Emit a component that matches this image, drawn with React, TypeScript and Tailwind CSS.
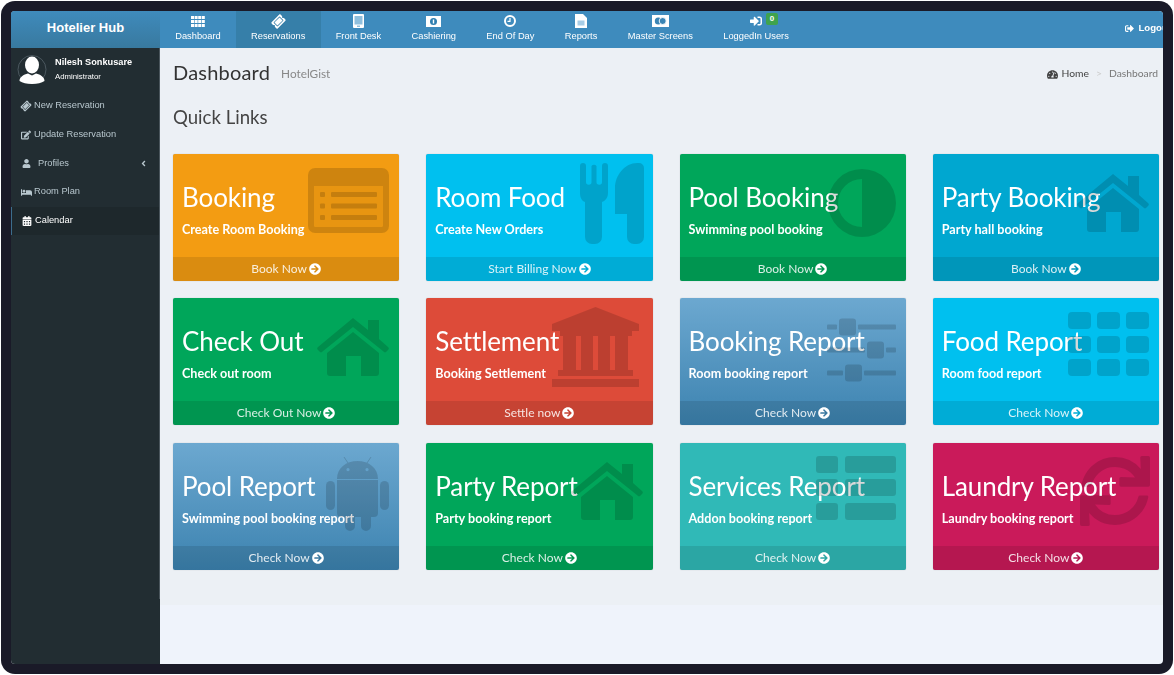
import React from "react";
import {
  FaTicketAlt, FaSignInAlt, FaSignOutAlt,
  FaTachometerAlt, FaArrowCircleRight, FaEdit, FaUser, FaBed, FaCalendarAlt, FaAngleLeft, FaSync,
} from "react-icons/fa";

const shade = "rgba(0,0,0,0.15)";

function BookingIcon() {
  return (
    <svg width="81" height="65" viewBox="0 0 81 65">
      <path fillRule="evenodd" fill={shade} d="M7 0h67a7 7 0 0 1 7 7v51a7 7 0 0 1-7 7H7a7 7 0 0 1-7-7V7a7 7 0 0 1 7-7zM6 18v40a1 1 0 0 0 1 1h67a1 1 0 0 0 1-1V18z" />
      <g fill={shade}>
        <rect x="6" y="18" width="69" height="41" opacity="0.3" />
        <rect x="12" y="24" width="5" height="5" rx="1" />
        <rect x="23" y="24" width="46" height="5" rx="1" />
        <rect x="12" y="35.500" width="5" height="5" rx="1" />
        <rect x="23" y="35.500" width="46" height="5" rx="1" />
        <rect x="12" y="47" width="5" height="5" rx="1" />
        <rect x="23" y="47" width="46" height="5" rx="1" />
      </g>
    </svg>
  );
}
function FoodIcon() {
  return (
    <svg width="64" height="81" viewBox="0 0 64 81">
      <path fill={shade} d="M0 3a3 3 0 0 1 6 0V19a2.500 2.500 0 0 0 5.500 0V3a3 3 0 0 1 5 0V19a2.500 2.500 0 0 0 5.500 0V3a3 3 0 0 1 6 0V30c0 5-3 8-6 9V74a7 7 0 0 1-7 7h-3a7 7 0 0 1-7-7V39C2 38 0 35 0 30z" />
      <path fill={shade} d="M57 0h2a5 5 0 0 1 5 5v69a7 7 0 0 1-7 7h-3a7 7 0 0 1-7-7V51H35V25C35 12 45 0 57 0z" />
    </svg>
  );
}
function ContrastIcon() {
  return (
    <svg width="68" height="68" viewBox="0 0 68 68">
      <path fill={shade} fillRule="evenodd" d="M34 0a34 34 0 1 1 0 68a34 34 0 1 1 0-68zM34 10a24 24 0 0 0 0 48z" />
    </svg>
  );
}
function HouseIcon() {
  return (
    <svg width="72" height="58" viewBox="0 0 72 58">
      <g fill={shade}>
        <path d="M36 0 L51 12 V2 H62 V21 L71 29 a2 2 0 0 1 0 3 l-1.500 1.500 a2 2 0 0 1-3 0 L36 9 L5.500 33.500 a2 2 0 0 1-3 0 L1 32 a2 2 0 0 1 0-3z" />
        <path d="M36 14 L62 35 V55 a3 3 0 0 1-3 3 H44 V38 H29 V58 H13 a3 3 0 0 1-3-3 V35z" />
      </g>
    </svg>
  );
}
function BankIcon() {
  return (
    <svg width="87" height="80" viewBox="0 0 87 80">
      <g fill={shade}>
        <path d="M43.500 0 L87 17 V24 H0 V17z" />
        <rect x="8" y="24" width="72" height="5" />
        <rect x="11" y="29" width="13" height="34" />
        <rect x="29" y="29" width="12" height="34" />
        <rect x="46" y="29" width="12" height="34" />
        <rect x="63" y="29" width="13" height="34" />
        <rect x="6" y="63" width="75" height="6" />
        <rect x="0" y="72" width="87" height="8" />
      </g>
    </svg>
  );
}
function SlidersIcon() {
  const rows = [
    { y: 9, k: 12 },
    { y: 32, k: 40 },
    { y: 55, k: 18 },
  ];
  return (
    <svg width="69" height="64" viewBox="0 0 69 64">
      <g fill={shade}>
        {rows.map((r) => (
          <g key={r.y}>
            <rect x="0" y={r.y - 2.5} width={r.k - 2} height="5" rx="1" />
            <rect x={r.k + 19} y={r.y - 2.5} width={69 - r.k - 19} height="5" rx="1" />
            <rect x={r.k} y={r.y - 8.5} width="17" height="17" rx="3" />
          </g>
        ))}
      </g>
    </svg>
  );
}
function GridIcon() {
  const xs = [0, 29, 58];
  const ys = [0, 24, 47];
  return (
    <svg width="81" height="64" viewBox="0 0 81 64">
      <g fill={shade}>
        {ys.map((y) => xs.map((x) => <rect key={`${x}-${y}`} x={x} y={y} width="23" height="17" rx="4" />))}
      </g>
    </svg>
  );
}
function ListIcon() {
  const ys = [0, 23, 47];
  return (
    <svg width="80" height="64" viewBox="0 0 80 64">
      <g fill={shade}>
        {ys.map((y) => (
          <g key={y}>
            <rect x="0" y={y} width="22" height="17" rx="3" />
            <rect x="29" y={y} width="51" height="17" rx="3" />
          </g>
        ))}
      </g>
    </svg>
  );
}
function AndroidIcon() {
  return (
    <svg width="63" height="74" viewBox="0 0 63 74">
      <g fill={shade}>
        <rect x="0" y="24" width="9" height="29" rx="4.500" />
        <rect x="54" y="24" width="9" height="29" rx="4.500" />
        <path fillRule="evenodd" d="M11 22C11 11 20 4 31.500 4S52 11 52 22zM22 11a1.600 1.600 0 1 0 0 3.200a1.600 1.600 0 1 0 0-3.200zM41 11a1.600 1.600 0 1 0 0 3.200a1.600 1.600 0 1 0 0-3.200z" />
        <path d="M11 23H52V56a4 4 0 0 1-4 4H15a4 4 0 0 1-4-4z" />
        <path d="M19 60H29V69a5 5 0 0 1-10 0zM35 60H45V69a5 5 0 0 1-10 0z" />
      </g>
      <path d="M18 0l4 6M45 0l-4 6" stroke={shade} strokeWidth="1" />
    </svg>
  );
}

function NavGrid() {
  return (
    <svg width="14" height="11" viewBox="0 0 14 11" fill="#fff">
      {[0, 4, 8].map((y) => [0, 3.6, 7.2, 10.8].map((x) => <rect key={`${x}-${y}`} x={x} y={y} width="3" height="3" />))}
    </svg>
  );
}
function NavBuilding() {
  return (
    <svg width="11" height="14" viewBox="0 0 11 14">
      <rect width="11" height="14" rx="1" fill="#fff" />
      <rect x="1.500" y="2" width="8" height="8.500" fill="#8fbfdd" />
      <rect x="4" y="11.500" width="3" height="1.500" fill="#8fbfdd" />
    </svg>
  );
}
function NavMoney({ w }: { w: number }) {
  return (
    <svg width={w} height="11" viewBox="0 0 15 11">
      <rect width="15" height="11" fill="#fff" />
      <circle cx="7.500" cy="5.500" r="3.500" fill="#2f7fb0" />
      <rect x="6.800" y="3.500" width="1.400" height="4" fill="#fff" />
    </svg>
  );
}
function NavMaster() {
  return (
    <svg width="17" height="12" viewBox="0 0 17 12">
      <rect width="17" height="12" fill="#fff" />
      <circle cx="6.300" cy="6" r="3.500" fill="#3a85b5" />
      <circle cx="10.700" cy="6" r="3.500" fill="#3a85b5" stroke="#fff" strokeWidth="0.900" />
    </svg>
  );
}
function NavClock() {
  return (
    <svg width="12" height="12" viewBox="0 0 12 12">
      <circle cx="6" cy="6" r="5" fill="none" stroke="#fff" strokeWidth="2" />
      <path d="M6 3v3.300H3.500" fill="none" stroke="#fff" strokeWidth="1.200" />
    </svg>
  );
}
function NavFile() {
  return (
    <svg width="12" height="14" viewBox="0 0 12 14">
      <path d="M0 0h8l4 4v10H0z" fill="#fff" />
      <path d="M2.500 6.500h7v5h-7z" fill="#a8cde6" />
    </svg>
  );
}

const cards = [
  { t: "Booking", s: "Create Room Booking", f: "Book Now", bg: "bg-[#f39c12]", icon: <BookingIcon />, pos: "top-[14px] right-[10px]" },
  { t: "Room Food", s: "Create New Orders", f: "Start Billing Now", bg: "bg-[#00c0ef]", icon: <FoodIcon />, pos: "top-[9px] right-[9px]" },
  { t: "Pool Booking", s: "Swimming pool booking", f: "Book Now", bg: "bg-[#00a65a]", icon: <ContrastIcon />, pos: "top-[15px] right-[10px]" },
  { t: "Party Booking", s: "Party hall booking", f: "Book Now", bg: "bg-[#00a7d0]", icon: <HouseIcon />, pos: "top-[20px] right-[10px]" },
  { t: "Check Out", s: "Check out room", f: "Check Out Now", bg: "bg-[#00a65a]", icon: <HouseIcon />, pos: "top-[20px] right-[10px]" },
  { t: "Settlement", s: "Booking Settlement", f: "Settle now", bg: "bg-[#dd4b39]", icon: <BankIcon />, pos: "top-[9px] right-[14px]" },
  { t: "Booking Report", s: "Room booking report", f: "Check Now", bg: "bg-gradient-to-b from-[#6ca8d0] to-[#3c83b0]", icon: <SlidersIcon />, pos: "top-[20px] right-[10px]" },
  { t: "Food Report", s: "Room food report", f: "Check Now", bg: "bg-[#00c0ef]", icon: <GridIcon />, pos: "top-[14px] right-[10px]" },
  { t: "Pool Report", s: "Swimming pool booking report", f: "Check Now", bg: "bg-gradient-to-b from-[#6ca8d0] to-[#3c83b0]", icon: <AndroidIcon />, pos: "top-[14px] right-[10px]" },
  { t: "Party Report", s: "Party booking report", f: "Check Now", bg: "bg-[#00a65a]", icon: <HouseIcon />, pos: "top-[19px] right-[10px]" },
  { t: "Services Report", s: "Addon booking report", f: "Check Now", bg: "bg-[#30b9b7]", icon: <ListIcon />, pos: "top-[13px] right-[10px]" },
  { t: "Laundry Report", s: "Laundry booking report", f: "Check Now", bg: "bg-[#ca1a5a]", icon: <FaSync size={70} color={shade} />, pos: "top-[13px] right-[9px]" },
];

const nav = [
  { l: "Dashboard", i: <NavGrid /> },
  { l: "Reservations", i: <FaTicketAlt size={13} className="-rotate-45" />, active: true },
  { l: "Front Desk", i: <NavBuilding /> },
  { l: "Cashiering", i: <NavMoney w={15} /> },
  { l: "End Of Day", i: <NavClock /> },
  { l: "Reports", i: <NavFile /> },
  { l: "Master Screens", i: <NavMaster /> },
];

const side = [
  { l: "New Reservation", i: <FaTicketAlt size={10} className="-rotate-45" /> },
  { l: "Update Reservation", i: <FaEdit size={10} /> },
  { l: "Profiles", i: <FaUser size={9} />, more: true },
  { l: "Room Plan", i: <FaBed size={11} /> },
  { l: "Calendar", i: <FaCalendarAlt size={10} />, active: true },
];

function Avatar() {
  return (
    <svg width="30" height="29" viewBox="0 0 30 29">
      <circle cx="15" cy="14.500" r="14" fill="#222d32" stroke="#55626a" strokeWidth="0.800" />
      <ellipse cx="15" cy="10" rx="7" ry="8.500" fill="#fff" />
      <path d="M2.500 26c0-4 4-6.500 8.500-7.500l4 2 4-2c4.500 1 8.500 3.500 8.500 7.500c-3 1.800-7 3-12.500 3s-9.500-1.200-12.500-3z" fill="#fff" />
    </svg>
  );
}

export default function App() {
  return (
    <div className="w-[1174px] h-[675px] bg-white overflow-hidden">
      <div className="m-px w-[1172px] h-[673px] p-[10px] rounded-[14px] bg-[#1a1a28]">
        <div className="w-[1152px] h-[653px] rounded-[4px] overflow-hidden flex flex-col bg-[#eff3fb] blur-[0.3px] font-['Liberation_Sans',sans-serif]">
          <header className="h-[37px] shrink-0 flex bg-[#3e8bbd] text-white overflow-hidden">
            <div className="w-[149px] shrink-0 flex items-center justify-center pb-[3px] font-bold text-[13px] bg-gradient-to-b from-[#3f8bbc] to-[#38799f]">
              Hotelier Hub
            </div>
            {nav.map((n) => (
              <div key={n.l} className={`h-full px-[15.200px] flex flex-col items-center justify-between pt-[3px] pb-[6px] ${n.active ? "bg-[#367fa9]" : ""}`}>
                <div className="h-[14px] flex items-center">{n.i}</div>
                <div className="text-[9.3px] leading-[12px] whitespace-nowrap text-white">{n.l}</div>
              </div>
            ))}
            <div className="h-full px-[15.200px] flex flex-col items-center justify-between pt-[3px] pb-[6px] relative">
              <div className="h-[14px] flex items-center"><FaSignInAlt size={12} /></div>
              <span className="absolute left-[58px] top-[2px] w-[12px] h-[12px] rounded-[2px] bg-[#3fa34d] text-[8px] font-bold flex items-center justify-center">0</span>
              <div className="text-[9.3px] leading-[12px] whitespace-nowrap text-white">LoggedIn Users</div>
            </div>
            <div className="ml-auto -mr-[8px] flex items-center gap-[5px] text-[9.6px] font-semibold pb-[2px]">
              <FaSignOutAlt size={9} />
              <span>Logout</span>
            </div>
          </header>
          <div className="flex-1 flex min-h-0">
            <aside className="w-[149px] shrink-0 bg-[#222d32] text-[#b8c7ce]">
              <div className="h-[551px] border-r border-r-[#4a555c]">
                <div className="h-[44px] flex pl-[6px] pt-[7px]">
                  <Avatar />
                  <div className="ml-[8px] text-white">
                    <div className="text-[9.2px] font-bold leading-[12px] mt-[1px]">Nilesh Sonkusare</div>
                    <div className="text-[7.8px] leading-[10px] mt-[4px]">Administrator</div>
                  </div>
                </div>
                {side.map((s) => (
                  <div key={s.l} className={`h-[28.7px] flex items-center pl-[10px] pr-[11px] text-[9.3px] ${s.active ? "bg-[#1e282c] text-white border-l border-l-[#3c6d8c] pl-[9px]" : ""}`}>
                    <span className={`${s.more ? "w-[17px] pl-px" : "w-[13px]"} flex items-center`}>{s.i}</span>
                    <span>{s.l}</span>
                    {s.more && <FaAngleLeft size={9} className="ml-auto" />}
                  </div>
                ))}
              </div>
            </aside>
            <main className="flex-1 min-w-0 font-['Lato',sans-serif]">
              <div className="h-[557px] bg-[#ecf0f5] pl-[13px] pr-[4px]">
                <div className="flex items-center h-[48px]">
                  <h1 className="text-[20px] text-[#333] tracking-[0.2px]">Dashboard</h1>
                  <span className="ml-[11px] mt-[4px] text-[11.8px] text-[#888]">HotelGist</span>
                  <div className="ml-auto mr-px mt-[4px] flex items-center text-[10.3px] text-[#444]">
                    <FaTachometerAlt size={11} />
                    <span className="ml-[4px]">Home</span>
                    <span className="mx-[7px] text-[#ccc]">&gt;</span>
                    <span className="text-[#777]">Dashboard</span>
                  </div>
                </div>
                <h2 className="mt-[9px] text-[18.6px] leading-[24px] text-[#444]">Quick Links</h2>
                <div className="mt-[25px] grid grid-cols-4 gap-x-[27px] gap-y-[17.300px]">
                  {cards.map((c) => (
                    <div key={c.t} className={`relative h-[127px] rounded-[2px] overflow-hidden text-white flex flex-col shadow-[0_0_1px_rgba(0,0,0,0.3)] ${c.bg}`}>
                      <div className="flex-1 pl-[9px] pt-[24px]">
                        <div className="text-[26px] leading-[38px] tracking-[-0.1px] whitespace-nowrap">{c.t}</div>
                        <div className="mt-[4px] text-[12.6px] leading-[20px] font-bold whitespace-nowrap">{c.s}</div>
                      </div>
                      <div className="h-[24px] bg-black/10 flex items-center justify-center gap-[2px] text-[12px] text-white/85">
                        <span>{c.f}</span>
                        <FaArrowCircleRight size={12} className="text-white" />
                      </div>
                      <div className={`absolute ${c.pos}`}>{c.icon}</div>
                    </div>
                  ))}
                </div>
              </div>
            </main>
          </div>
        </div>
      </div>
    </div>
  );
}
